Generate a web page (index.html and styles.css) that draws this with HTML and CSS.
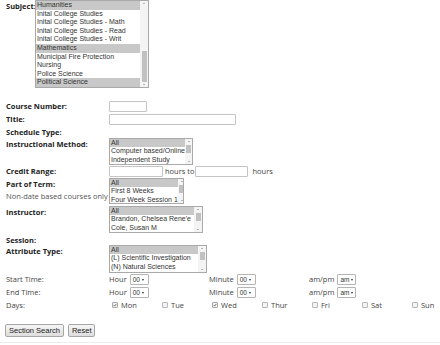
FILE: index.html
```html
<!DOCTYPE html>
<html>
<head>
<meta charset="utf-8">
<link rel="stylesheet" href="styles.css">
</head>
<body>
<div class="page">
  <div class="subject-row">
    <span class="label b subj-label">Subject:</span>
    <div class="listbox lb-subject">
      <div class="opts">
        <div class="opt sel">Humanities</div>
        <div class="opt">Inital College Studies</div>
        <div class="opt">Inital College Studies - Math</div>
        <div class="opt">Inital College Studies - Read</div>
        <div class="opt">Inital College Studies - Writ</div>
        <div class="opt sel">Mathematics</div>
        <div class="opt">Municipal Fire Protection</div>
        <div class="opt">Nursing</div>
        <div class="opt">Police Science</div>
        <div class="opt sel">Political Science</div>
      </div>
      <div class="sb"><span class="up"></span><span class="track"><span class="thumb t-subject"></span></span><span class="down"></span></div>
    </div>
  </div>

  <div class="form">
    <div class="row h13">
      <span class="label b">Course Number:</span>
      <div class="val"><input class="txt w-course" type="text"></div>
    </div>
    <div class="row h13">
      <span class="label b">Title:</span>
      <div class="val"><input class="txt w-title" type="text"></div>
    </div>
    <div class="row h12">
      <span class="label b">Schedule Type:</span>
    </div>
    <div class="row h27">
      <span class="label b">Instructional Method:</span>
      <div class="listbox lb-instr">
        <div class="opts">
          <div class="opt sel">All</div>
          <div class="opt">Computer based/Online</div>
          <div class="opt">Independent Study</div>
        </div>
        <div class="sb"><span class="up"></span><span class="track"><span class="thumb t-small"></span></span><span class="down"></span></div>
      </div>
    </div>
    <div class="row h13">
      <span class="label b">Credit Range:</span>
      <div class="val">
        <input class="txt w-credit1" type="text"><span class="txtlabel">hours to</span><input class="txt w-credit2" type="text"><span class="txtlabel gap4">hours</span>
      </div>
    </div>
    <div class="row h28">
      <div class="label">
        <div class="b">Part of Term:</div>
        <div class="sub">Non-date based courses only</div>
      </div>
      <div class="listbox lb-part">
        <div class="opts">
          <div class="opt sel">All</div>
          <div class="opt">First 8 Weeks</div>
          <div class="opt">Four Week Session 1</div>
        </div>
        <div class="sb"><span class="up"></span><span class="track"><span class="thumb t-small"></span></span><span class="down"></span></div>
      </div>
    </div>
    <div class="row h28">
      <span class="label b">Instructor:</span>
      <div class="listbox lb-instructor">
        <div class="opts">
          <div class="opt sel">All</div>
          <div class="opt">Brandon, Chelsea Rene'e</div>
          <div class="opt">Cole, Susan M</div>
        </div>
        <div class="sb"><span class="up"></span><span class="track"><span class="thumb t-small"></span></span><span class="down"></span></div>
      </div>
    </div>
    <div class="row h11">
      <span class="label b">Session:</span>
    </div>
    <div class="row h28">
      <span class="label b">Attribute Type:</span>
      <div class="listbox lb-attr">
        <div class="opts">
          <div class="opt sel">All</div>
          <div class="opt">(L) Scientific Investigation</div>
          <div class="opt">(N) Natural Sciences</div>
        </div>
        <div class="sb"><span class="up"></span><span class="track"><span class="thumb t-small"></span></span><span class="down"></span></div>
      </div>
    </div>
    <div class="row h13">
      <span class="label">Start Time:</span>
      <div class="cols3">
        <div class="tcell">Hour<span class="dd">00<i></i></span></div>
        <div class="tcell">Minute<span class="dd">00<i></i></span></div>
        <div class="tcell">am/pm<span class="dd">am<i></i></span></div>
      </div>
    </div>
    <div class="row h13">
      <span class="label">End Time:</span>
      <div class="cols3">
        <div class="tcell">Hour<span class="dd">00<i></i></span></div>
        <div class="tcell">Minute<span class="dd">00<i></i></span></div>
        <div class="tcell">am/pm<span class="dd">am<i></i></span></div>
      </div>
    </div>
    <div class="row h13">
      <span class="label">Days:</span>
      <div class="days">
        <div class="day"><span class="cb on"><svg viewBox="0 0 6 6" width="6" height="6"><path d="M1 3.2 L2.4 4.6 L5 1.4" fill="none" stroke="#333" stroke-width="1"/></svg></span>Mon</div>
        <div class="day"><span class="cb"></span>Tue</div>
        <div class="day"><span class="cb on"><svg viewBox="0 0 6 6" width="6" height="6"><path d="M1 3.2 L2.4 4.6 L5 1.4" fill="none" stroke="#333" stroke-width="1"/></svg></span>Wed</div>
        <div class="day"><span class="cb"></span>Thur</div>
        <div class="day"><span class="cb"></span>Fri</div>
        <div class="day"><span class="cb"></span>Sat</div>
        <div class="day"><span class="cb"></span>Sun</div>
      </div>
    </div>
  </div>

  <div class="buttons">
    <button class="btn" type="button">Section Search</button><button class="btn" type="button">Reset</button>
  </div>
</div>
<div class="rule"></div>
</body>
</html>
```

FILE: styles.css
```css
html, body {
  margin: 0;
  padding: 0;
  background: #ffffff;
}

body {
  font-family: "Open Sans", "Liberation Sans", sans-serif;
  font-size: 7.5px;
  color: #444444;
  width: 440px;
  height: 345px;
  overflow: hidden;
  position: relative;
}

.page {
  padding-left: 6px;
}

.b {
  font-weight: 700;
  color: #222222;
}

.label {
  width: 103px;
  flex: none;
  line-height: 12px;
  white-space: nowrap;
}

.sub {
  color: #555555;
  font-weight: 400;
}

.subject-row {
  display: flex;
  height: 100px;
}

.subj-label {
  width: 29px;
}

/* listbox */
.listbox {
  display: flex;
  border: 1px solid #a9a9a9;
  background: #ffffff;
  box-sizing: border-box;
  font-family: "Liberation Sans", Arial, sans-serif;
  font-size: 7px;
  color: #333333;
  overflow: hidden;
}

.opts {
  flex: 1;
}

.opt {
  height: 8.5px;
  line-height: 8.5px;
  padding-left: 1px;
  white-space: nowrap;
}

.opt.sel {
  background: #c8c8c8;
}

.sb {
  width: 8px;
  flex: none;
  display: flex;
  flex-direction: column;
  align-items: center;
  background: #f4f4f4;
}

.sb .up,
.sb .down {
  flex: none;
  height: 5px;
  width: 8px;
  position: relative;
}

.sb .up::after,
.sb .down::after {
  content: "";
  position: absolute;
  left: 3px;
  border-left: 1px solid transparent;
  border-right: 1px solid transparent;
}

.sb .up::after {
  top: 2px;
  border-bottom: 1.5px solid #777777;
}

.sb .down::after {
  top: 2px;
  border-top: 1.5px solid #777777;
}

.sb .track {
  flex: 1;
  width: 8px;
  display: flex;
  flex-direction: column;
  align-items: center;
}

.thumb {
  width: 5px;
  background: #c1c1c1;
}

.t-subject {
  margin-top: 45px;
  height: 31px;
}

.t-small {
  margin-top: 1px;
  height: 8px;
}

.lb-subject {
  width: 114px;
  height: 88px;
}

.lb-subject .opt {
  height: 8.6px;
  line-height: 8.6px;
}

.lb-instr {
  width: 84px;
  height: 27px;
}

.lb-part {
  width: 75px;
  height: 26px;
}

.lb-instructor {
  width: 94px;
  height: 27px;
}

.lb-attr {
  width: 98px;
  height: 28px;
}

.lb-instr .opt,
.lb-part .opt,
.lb-instructor .opt,
.lb-attr .opt {
  height: 8.3px;
  line-height: 8.3px;
}

/* rows */
.row {
  display: flex;
  align-items: flex-start;
}

.h11 { height: 11px; }
.h12 { height: 12px; }
.h13 { height: 13px; }
.h27 { height: 27px; }
.h28 { height: 28px; }

.val {
  display: flex;
  align-items: center;
  padding-top: 1px;
}

.txt {
  box-sizing: border-box;
  height: 11px;
  margin: 0;
  padding: 0;
  border: 1px solid #c4c4c4;
  border-radius: 1px;
  background: #ffffff;
  outline: none;
}

.w-course { width: 38px; }
.w-title { width: 127px; }
.w-credit1 { width: 54px; }
.w-credit2 { width: 53px; }

.txtlabel {
  margin: 0 1px 0 2px;
  line-height: 11px;
  color: #444444;
}

.gap4 {
  margin-left: 4px;
}

/* time selects */
.cols3 {
  display: grid;
  grid-template-columns: 100px 100px 100px;
  padding-top: 1px;
}

.tcell {
  display: flex;
  align-items: center;
  gap: 3px;
  line-height: 11px;
  white-space: nowrap;
}

.dd {
  box-sizing: border-box;
  display: inline-flex;
  align-items: center;
  height: 11px;
  width: 19px;
  padding-left: 2px;
  border: 1px solid #b5b5b5;
  border-radius: 1px;
  font-family: "Liberation Sans", Arial, sans-serif;
  font-size: 6.5px;
  color: #333333;
  background: #ffffff;
}

.dd i {
  display: inline-block;
  margin-left: 2px;
  width: 0;
  height: 0;
  border-left: 1.5px solid transparent;
  border-right: 1.5px solid transparent;
  border-top: 2px solid #333333;
}

/* days */
.days {
  display: grid;
  grid-template-columns: repeat(7, 50px);
}

.day {
  display: flex;
  align-items: center;
  line-height: 12px;
  padding-left: 3px;
}

.cb {
  box-sizing: border-box;
  width: 6px;
  height: 6px;
  margin-right: 3px;
  border: 1px solid #b8b8b8;
  border-radius: 1px;
  background: #f3f3f3;
  display: inline-flex;
  align-items: center;
  justify-content: center;
  overflow: hidden;
}

.cb svg {
  display: block;
}

.cb.on {
  border-color: #a8a8a8;
}

/* buttons */
.buttons {
  display: flex;
  gap: 4px;
  margin-top: 12px;
  margin-left: -1px;
}

.btn {
  box-sizing: border-box;
  height: 13px;
  padding: 0 3px;
  margin: 0;
  border: 1px solid #a6a6a6;
  border-radius: 2px;
  background: linear-gradient(#f6f6f6, #dedede);
  font-family: "Liberation Sans", Arial, sans-serif;
  font-size: 7.5px;
  color: #222222;
  line-height: 11px;
}

.rule {
  position: absolute;
  left: 0;
  right: 0;
  top: 342px;
  border-top: 1px solid #ececec;
}
```
